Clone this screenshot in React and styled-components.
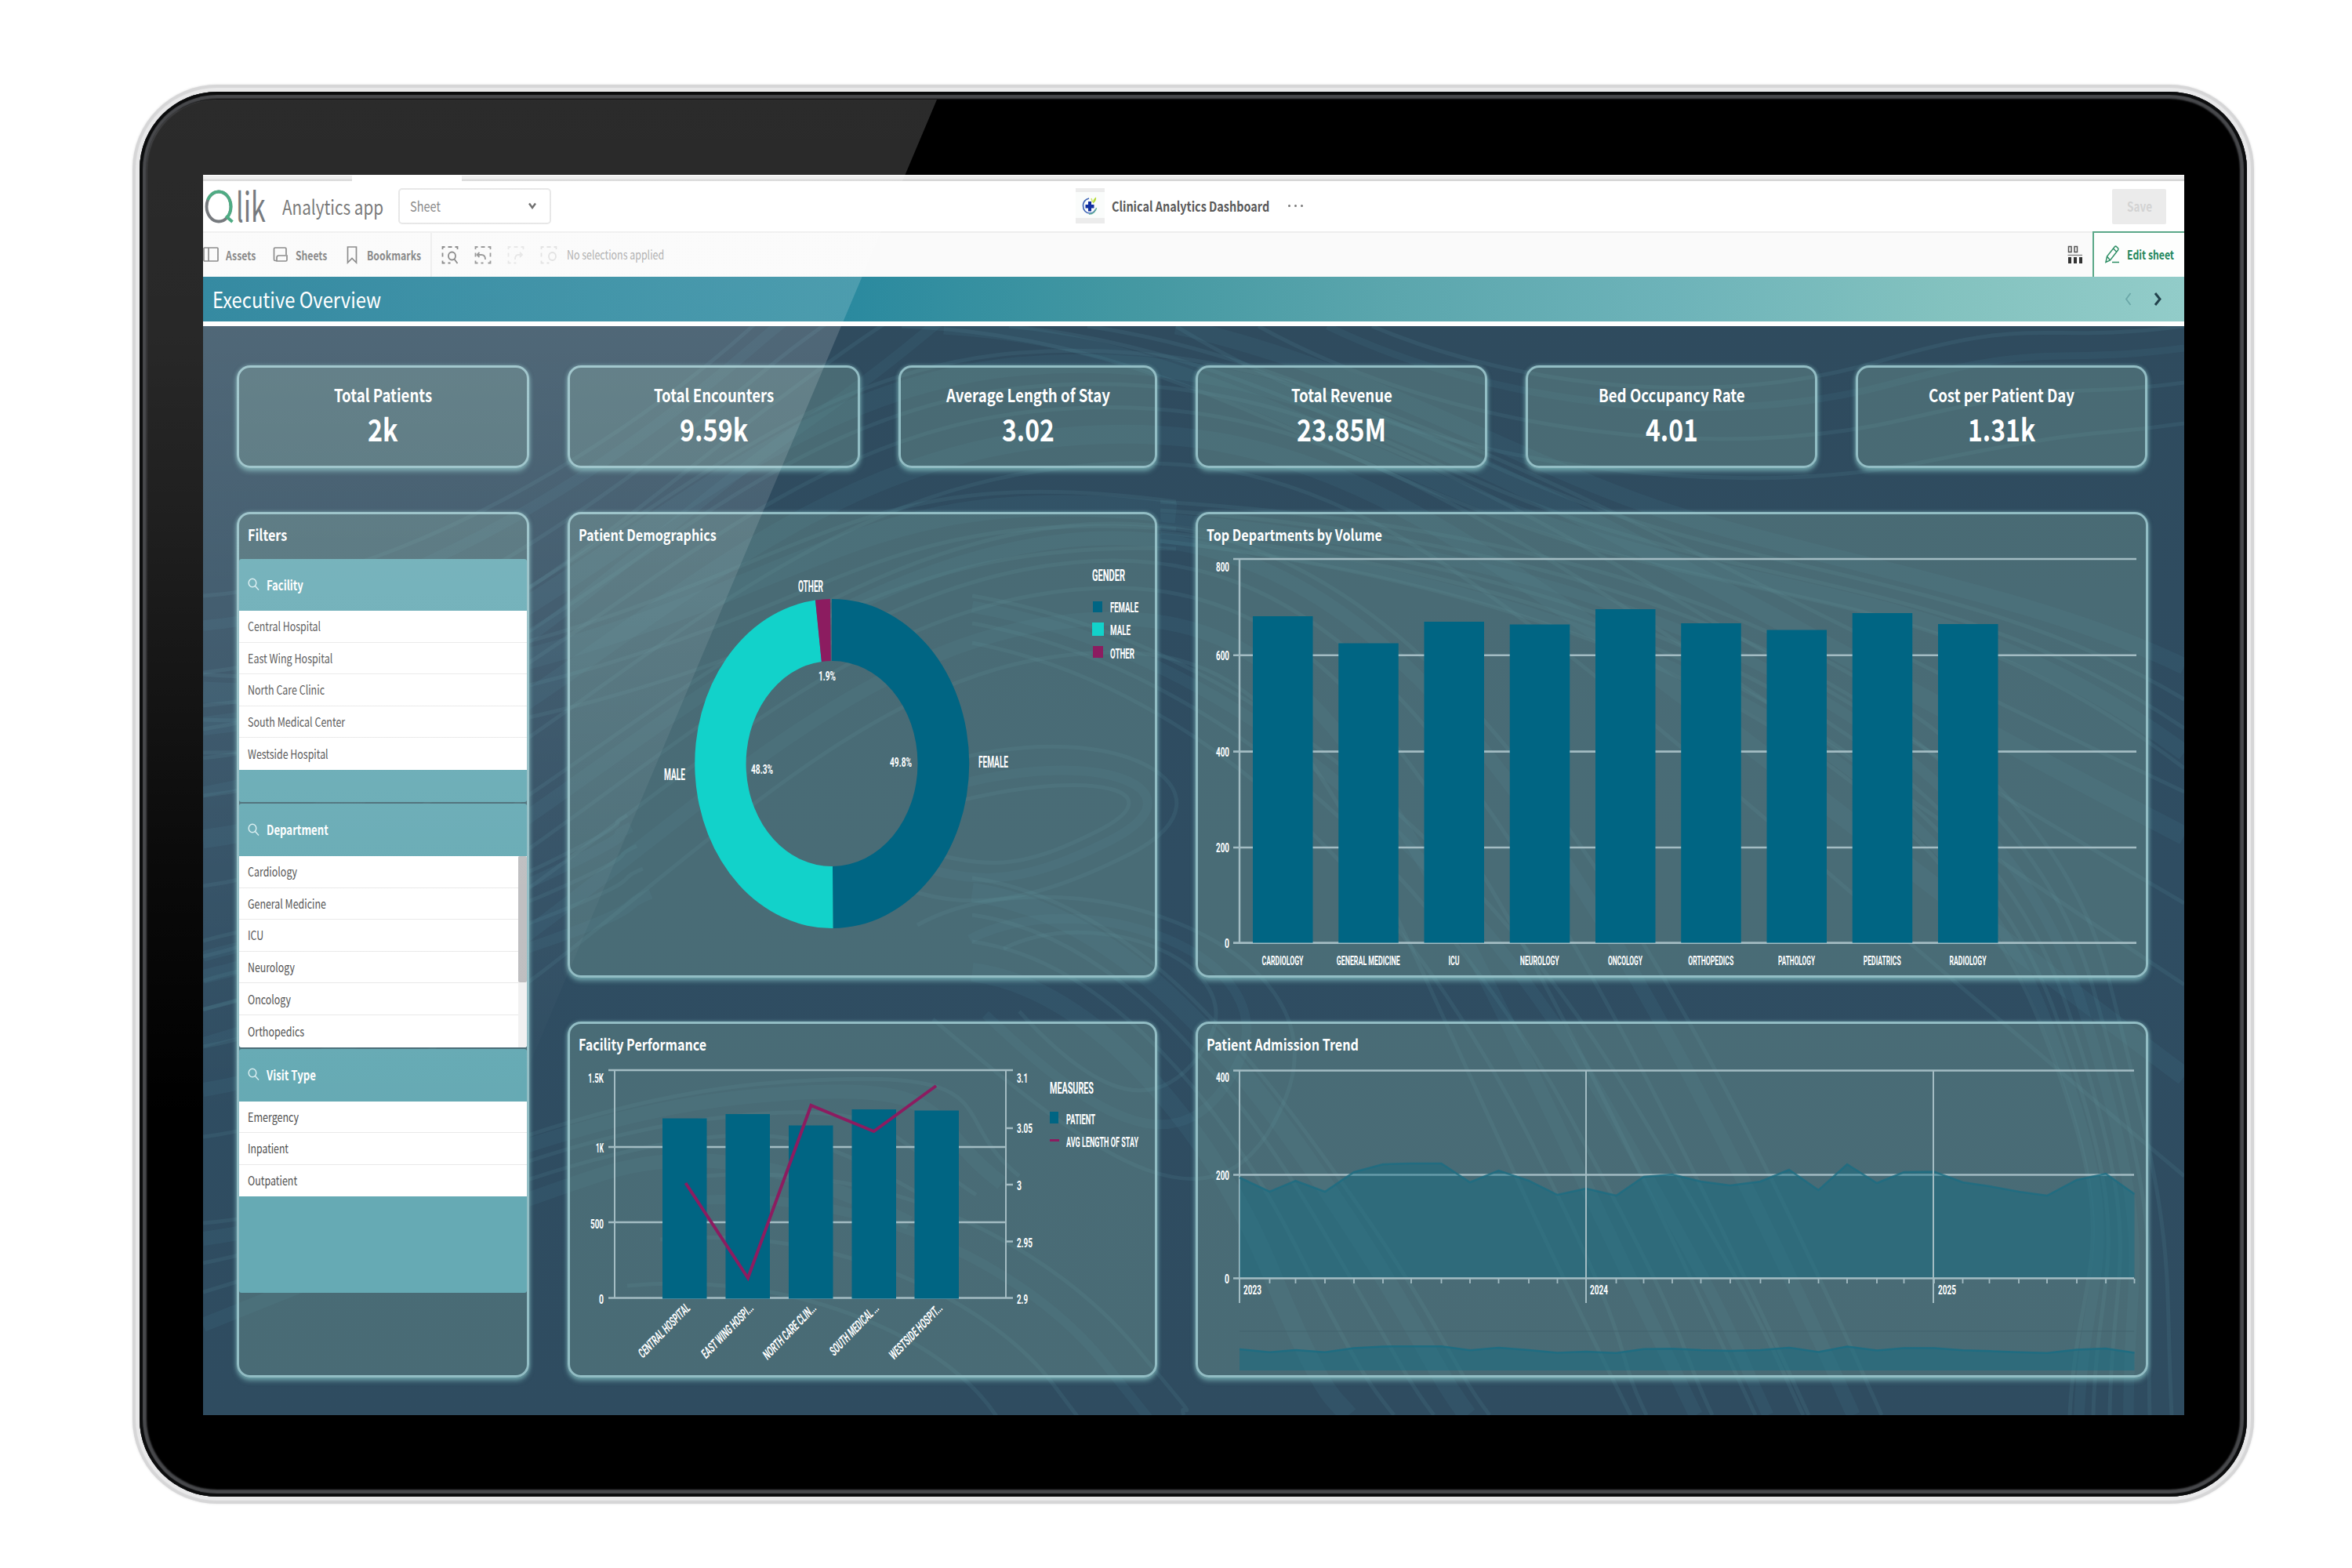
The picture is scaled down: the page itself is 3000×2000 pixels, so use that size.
import React, { useLayoutEffect, useRef, useState } from "react";
import styled, { createGlobalStyle } from "styled-components";

const UI = '"Noto Sans CJK SC", "Noto Sans", sans-serif';
const CHART = 'Roboto, "Liberation Sans", sans-serif';
const TEAL = "#006583";
const MINT = "#12d2ca";
const PLUM = "#8c1c60";
const GRID = "#a3bcc3";

const Global = createGlobalStyle`
  * { box-sizing: border-box; }
  body { margin: 0; background: #fff; }
`;

/* ---------- text squeezed to a given width ---------- */
const FitBox = styled.span`
  display: inline-block;
  flex: none;
  text-align: left;
  white-space: nowrap;
  font-family: ${UI};
  font-size: ${(p) => p.$size}px;
  font-weight: ${(p) => p.$weight || 400};
  line-height: ${(p) => p.$line || Math.round(p.$size * 1.3)}px;
  height: ${(p) => p.$line || Math.round(p.$size * 1.3)}px;
  color: ${(p) => p.$color || "inherit"};
`;
const FitInner = styled.span`
  display: inline-block;
  transform-origin: 0 0;
`;
function Fit({ w, size, weight, line, color, children }) {
  const ref = useRef(null);
  const [k, setK] = useState(1);
  useLayoutEffect(() => {
    const natural = ref.current.offsetWidth;
    if (natural) setK(w / natural);
  }, [w, children]);
  return (
    <FitBox $size={size} $weight={weight} $line={line} $color={color} style={{ width: w }}>
      <FitInner ref={ref} style={{ transform: `scaleX(${k})` }}>{children}</FitInner>
    </FitBox>
  );
}

/* ---------- device ---------- */
const Page = styled.div`
  width: 3000px;
  height: 2000px;
  padding: 108px 125px 82px 169px;
  background: #fff;
`;
const Device = styled.div`
  position: relative;
  width: 2706px;
  height: 1810px;
  padding: 9px;
  border-radius: 108px;
  background: #e9e9ea;
  box-shadow: inset 0 0 1px 4px #d6d6d7, 0 0 3px #ddd;
`;
const Bezel = styled.div`
  width: 100%;
  height: 100%;
  padding: 106px 80px 104px 81px;
  border-radius: 99px;
  background: #000;
  box-shadow: inset 0 0 1px 4px #0b0c0d, inset 0 0 2px 9px #48494c;
`;
const Glare = styled.div`
  position: absolute;
  left: 18px;
  top: 19px;
  width: 1100px;
  height: 1774px;
  border-top-left-radius: 88px;
  clip-path: polygon(0 0, 1008px 0, 259px 1774px, 0 1774px);
  background: linear-gradient(180deg, rgba(255, 255, 255, 0.168) 0, rgba(255, 255, 255, 0.155) 300px, rgba(255, 255, 255, 0.12) 540px, rgba(255, 255, 255, 0.045) 960px, rgba(255, 255, 255, 0) 1300px);
  pointer-events: none;
`;
const Screen = styled.div`
  display: flex;
  flex-direction: column;
  width: 2527px;
  height: 1582px;
  overflow: hidden;
  background: #fff;
`;

/* ---------- browser strip and bars ---------- */
const Strip = styled.div`
  display: flex;
  height: 8px;
  padding-top: 1px;
`;
const StripPart = styled.div`
  width: ${(p) => p.$w || "auto"};
  flex: ${(p) => (p.$w ? "none" : 1)};
  background: ${(p) => (p.$open ? "#fff" : "linear-gradient(#ececec 50%, #d6d6d6 75%)")};
`;
const Header = styled.div`
  display: flex;
  align-items: center;
  height: 66px;
  padding-bottom: 1px;
  border-bottom: 2px solid #eeeeee;
  background: #fff;
`;
const Logo = styled.div`
  display: flex;
  align-items: flex-start;
  width: 80px;
  height: 46px;
  margin: 0 21px 0 0;
  padding: 1px 0 0 2px;
`;
const Dropdown = styled.div`
  display: flex;
  align-items: center;
  justify-content: space-between;
  width: 195px;
  height: 46px;
  margin: 1px 0 0 19px;
  padding: 0 17px 1px 13px;
  border: 2px solid #e3e3e3;
  border-radius: 5px;
`;
const AppTitle = styled.div`
  display: flex;
  align-items: center;
  margin-left: 669px;
`;
const AppIcon = styled.div`
  display: flex;
  align-items: center;
  justify-content: center;
  width: 37px;
  height: 45px;
  margin-right: 9px;
  border-top: 5px solid #ececec;
  border-bottom: 7px solid #ececec;
  background: #fafcfb;
`;
const Dots = styled.div`
  display: flex;
  gap: 5px;
  margin-left: 24px;
  i { width: 3px; height: 3px; border-radius: 50%; background: #777; }
`;
const SaveButton = styled.div`
  display: flex;
  align-items: center;
  justify-content: center;
  width: 69px;
  height: 45px;
  margin: 1px 23px 0 auto;
  border-radius: 2px;
  background: #ebebeb;
`;
const Toolbar = styled.div`
  display: flex;
  align-items: center;
  height: 56px;
  background: #fafafa;
`;
const Tool = styled.div`
  display: flex;
  align-items: center;
  gap: ${(p) => p.$gap}px;
  margin-right: ${(p) => p.$after}px;
  padding-bottom: 1px;
`;
const Divider = styled.div`
  width: 2px;
  height: 100%;
  background: #ececec;
`;
const SelectionTools = styled.div`
  display: flex;
  align-items: center;
  gap: 20px;
  padding: 0 12px;
`;
const Note = styled.div`
  display: flex;
  padding-bottom: 2px;
`;
const ToolbarRight = styled.div`
  display: flex;
  align-items: center;
  gap: 12px;
  height: 100%;
  margin-left: auto;
`;
const EditButton = styled.div`
  display: flex;
  align-items: center;
  gap: 8px;
  width: 117px;
  height: 60px;
  margin: -2px 0;
  padding: 0 0 2px 13px;
  border: 2px solid #5aa888;
  border-right: 0;
  background: #fdfefd;
`;
const SheetBar = styled.div`
  display: flex;
  align-items: center;
  justify-content: space-between;
  height: 57px;
  padding: 0 29px 2px 12px;
  background: linear-gradient(90deg, #0f7490 0, #2b8a9f 33%, #4498a2 47%, #5ba6ad 60%, #6db3b9 74%, #83c2bf 88%, #92ccc9 100%);
`;
const Pager = styled.div`
  display: flex;
  gap: 28px;
  padding-top: 2px;
`;
const Rule = styled.div`
  height: 6px;
  background: #fff;
`;

/* ---------- sheet ---------- */
const Sheet = styled.div`
  position: relative;
  flex: 1;
  padding: 50px 47px 46px 43px;
  background: linear-gradient(180deg, #2f4b5e, #2f4d62 50%, #2f4c60);
`;
const Waves = styled.svg`
  position: absolute;
  inset: 0;
`;
const Content = styled.div`
  position: relative;
  display: flex;
  flex-direction: column;
  gap: 56px;
`;
const KpiRow = styled.div`
  display: grid;
  grid-template-columns: 373px 373px 330px 372px 372px 372px;
  gap: 49px;
  height: 131px;
`;
const cardLook = `
  border: 3px solid #92bdc4;
  border-radius: 17px;
  background: rgba(122, 165, 159, 0.35);
  box-shadow: 0 4px 6px rgba(135, 200, 200, 0.62), 0 0 5px rgba(135, 190, 195, 0.5);
  color: #fff;
`;
const Kpi = styled.div`
  ${cardLook}
  display: flex;
  flex-direction: column;
  align-items: center;
  gap: 6px;
  padding-top: 19px;
`;
const Panels = styled.div`
  display: grid;
  grid-template-columns: 373px 752px 1215px;
  grid-template-rows: 594px 454px;
  column-gap: 49px;
  row-gap: 56px;
`;
const Panel = styled.div`
  ${cardLook}
  display: flex;
  flex-direction: column;
  grid-row: ${(p) => p.$rows || "auto"};
  min-height: 0;
`;
const PanelHead = styled.div`
  height: ${(p) => p.$h || 49}px;
  flex: none;
  padding: 14px 0 0 11px;
`;
const Chart = styled.svg`
  display: block;
  flex: 1;
  min-height: 0;
  width: 100%;
`;

/* ---------- filters ---------- */
const FilterBlock = styled.div`
  height: ${(p) => p.$h}px;
  margin: 0 0 2px 0;
  border-radius: 3px;
  overflow: hidden;
  background: #66aab4;
`;
const FilterHead = styled.div`
  display: flex;
  align-items: center;
  gap: 9px;
  height: ${(p) => p.$h || 67}px;
  padding: 0 0 1px 11px;
`;
const FilterList = styled.div`
  display: flex;
  background: #fff;
`;
const Rows = styled.div`
  flex: 1;
`;
const Row = styled.div`
  display: flex;
  align-items: center;
  height: 40.6px;
  padding-left: 11px;
  border-bottom: ${(p) => (p.$last ? "0" : "1px solid #e9e9e9")};
`;
const Track = styled.div`
  width: 11px;
  background: #f1f1f1;
`;
const Thumb = styled.div`
  height: 161px;
  border-radius: 2px;
  background: #bdbdbf;
`;

/* ---------- icons ---------- */
const Chevron = ({ w, h, d, color, sw = 2.4 }) => (
  <svg width={w} height={h} viewBox={`0 0 ${w} ${h}`} fill="none" stroke={color} strokeWidth={sw}><path d={d} /></svg>
);
const QMark = () => (
  <svg width="40" height="46" viewBox="0 0 40 46" fill="none" strokeWidth="3.8">
    <ellipse cx="18" cy="22.500" rx="15.500" ry="19" stroke="#5c6065" />
    <path d="M4 14C7 7 12 3.500 18 3.500c9 0 15.500 8.500 15.500 19 0 6-2 11-5.500 14.500M27 34.500l8.500 7.500" stroke="#2c9c6c" />
  </svg>
);
const AssetsIcon = () => (
  <svg width="21" height="20" viewBox="0 0 21 20" fill="none" stroke="#777" strokeWidth="1.7"><rect x="1" y="1" width="18" height="17" rx="1" /><path d="M7 1v17" /></svg>
);
const SheetsIcon = () => (
  <svg width="20" height="20" viewBox="0 0 20 20" fill="none" stroke="#777" strokeWidth="1.7"><path d="M5 17.500H3a1.500 1.500 0 0 1-1.500-1.500V2.500A1.500 1.500 0 0 1 3 1h12.500A1.500 1.500 0 0 1 17 2.500V10M7.500 11h10.500v5.500a1.500 1.500 0 0 1-1.500 1.500H5V13.500Q5 11 7.500 11" /></svg>
);
const BookmarkIcon = () => (
  <svg width="14" height="24" viewBox="0 0 14 24" fill="none" stroke="#777" strokeWidth="1.700"><path d="M1.500 22V2h11v20L7 16.500z" /></svg>
);
const SelIcon = ({ color, children }) => (
  <svg width="22" height="25" viewBox="0 0 22 25" fill="none" stroke={color} strokeWidth="1.800">
    <path d="M1.500 5V2h3M8.500 2h5M17.500 2h3v3M1.500 9.500v5M1.500 19.500v3h3M8.500 22.500h3" />
    {children}
  </svg>
);
const GridIcon = () => (
  <svg width="20" height="24" viewBox="0 0 20 24" fill="none" stroke="#555" strokeWidth="1.500">
    <path d="M1.500 1.500h3.500v7H1.500zM9 1.500h3.500v7H9z" /><path d="M.5 12.500h18.500" stroke="#888" />
    <path d="M1 15h4v8H1zM8 15h4v8H8zM15 15h4v8h-4z" fill="#333" stroke="none" />
  </svg>
);
const PencilIcon = () => (
  <svg width="21" height="25" viewBox="0 0 21 25" fill="none" stroke="#2f8f66" strokeWidth="1.500">
    <path d="M2 22.500l1.500-7.500L13.500 2.500q1-1 2.500.5l1.500 1.500q1 1 0 2.500L7.500 20zM3.500 15l4 5M11.500 5l4.500 4.500M10 22.500h9" />
  </svg>
);
const SearchIcon = () => (
  <svg width="15" height="17" viewBox="0 0 15 17" fill="none" stroke="#d8edf0" strokeWidth="1.500"><ellipse cx="6" cy="6.500" rx="4.800" ry="5.300" /><path d="M9.500 10.500l4.500 5" /></svg>
);
const HealthIcon = () => (
  <svg width="21" height="28" viewBox="0 0 21 28" fill="none">
    <path d="M9 5C4 6.500 1.500 10 1.500 14.500c0 6 4 9.500 8.500 9.500 3.500 0 6-2 7.500-5" stroke="#3c62b4" strokeWidth="1.600" />
    <path d="M9 25c5 .5 9-4 9.500-8" stroke="#5fae9a" strokeWidth="1.500" />
    <path d="M14 11c0-4 2-6.500 4-7.500.5 3-.5 6-4 8z" fill="#b7dc3c" /><path d="M13.500 10L12 5" stroke="#cde56a" strokeWidth="1.500" />
    <path d="M8 9h4v4h3.500v4.500H12v4H8v-4H4.500V13H8z" fill="#1230a0" />
  </svg>
);

/* ---------- contour lines behind the sheet ---------- */
const mix = (a, b, t) => a.map((v, i) => Math.round(v + (b[i] - v) * t));
const toPath = (n) => `M${n[0]} ${n[1]}C${n.slice(2, 8).join(" ")}S${n.slice(8).join(" ")}`;
const BUNDLES = [
  [[259, 760, 520, 740, 800, 560, 960, 416, 1100, 380, 1200, 340], [259, 1010, 560, 960, 800, 700, 1000, 560, 1200, 400, 1300, 330], 5, 9],
  [[259, 900, 700, 860, 900, 480, 1300, 450, 2000, 640, 2786, 1010], [259, 1130, 640, 1080, 900, 660, 1330, 600, 1900, 760, 2786, 1500], 6, 16],
  [[259, 1220, 640, 1130, 900, 760, 1300, 680, 2000, 900, 2400, 1805], [259, 1450, 660, 1400, 960, 900, 1330, 840, 1700, 1050, 2080, 1805], 6, 12],
  [[259, 860, 500, 880, 700, 820, 900, 740, 1200, 600, 1500, 640], [259, 960, 500, 960, 700, 920, 900, 850, 1200, 690, 1500, 700], 4, 18],
  [[1150, 416, 1500, 430, 1700, 600, 2000, 690, 2500, 760, 2786, 980], [1500, 416, 1750, 470, 1950, 600, 2150, 660, 2600, 760, 2786, 850], 5, 14],
  [[1750, 416, 1950, 500, 2200, 520, 2400, 460, 2600, 440, 2786, 416], [1500, 416, 1800, 600, 2200, 640, 2450, 590, 2650, 560, 2786, 540], 4, 6],
  [[1480, 690, 2100, 760, 2480, 1000, 2600, 1300, 2650, 1600, 2640, 1805], [1480, 640, 2150, 680, 2600, 900, 2690, 1250, 2760, 1600, 2770, 1805], 7, 9],
  [[1240, 760, 1600, 820, 1900, 1100, 2080, 1400, 2250, 1700, 2300, 1805], [1240, 820, 1550, 880, 1800, 1150, 1950, 1450, 2050, 1700, 2100, 1805], 4, 10],
  [[1240, 1120, 1450, 1150, 1600, 1350, 1720, 1520, 1850, 1740, 1900, 1805], [1240, 1240, 1400, 1260, 1550, 1450, 1620, 1620, 1700, 1780, 1720, 1805], 5, 16],
  [[900, 1500, 1150, 1480, 1350, 1600, 1450, 1720, 1500, 1780, 1510, 1805], [800, 1640, 1000, 1620, 1200, 1700, 1270, 1805, 1290, 1830, 1300, 1850], 4, 8],
  [[259, 1560, 500, 1540, 700, 1400, 1000, 1380, 1200, 1420, 1300, 1500], [259, 1690, 480, 1600, 640, 1540, 760, 1500, 1000, 1480, 1160, 1560], 5, 12],
  [[1230, 1020, 1400, 980, 1500, 1010, 1400, 1060, 1260, 1110, 1160, 1080], [1180, 980, 1420, 900, 1600, 1010, 1440, 1090, 1200, 1160, 1100, 1110], 3, 8],
  [[1280, 1210, 1400, 1150, 1600, 1230, 1540, 1330, 1400, 1400, 1300, 1290], [1170, 1180, 1350, 1080, 1720, 1200, 1640, 1400, 1400, 1480, 1190, 1300], 3, 8],
  [[259, 1200, 400, 1160, 560, 1170, 700, 1100, 760, 1060, 800, 1040], [259, 1330, 420, 1280, 560, 1250, 700, 1200, 780, 1160, 830, 1140], 5, 9],
];
const Contours = () => (
  <Waves width="2527" height="1389" viewBox="259 416 2527 1389" fill="none" stroke="#5591a4">
    {BUNDLES.map(([a, b, n, w], k) =>
      Array.from({ length: n }, (_, i) => (
        <path key={`${k}-${i}`} d={toPath(mix(a, b, Math.pow(i / (n - 1), 1.35)))} strokeWidth={i % 3 === 1 ? w * 1.5 : 5} strokeOpacity={i % 3 === 1 ? 0.11 : 0.15} />
      ))
    )}
  </Waves>
);

/* ---------- chart text ---------- */
const T = ({ x, y, w, s = 17, a = "start", children, ...rest }) => (
  <text x={x} y={y} textAnchor={a} textLength={w} lengthAdjust="spacingAndGlyphs" fontFamily={CHART} fontSize={s} fontWeight="700" fill="#fff" {...rest}>{children}</text>
);

/* ---------- donut ---------- */
const CX = 1061, CY = 975;
const pt = (deg, rx, ry) => {
  const r = (deg * Math.PI) / 180;
  return `${(CX + rx * Math.sin(r)).toFixed(1)} ${(CY - ry * Math.cos(r)).toFixed(1)}`;
};
const slice = (a, b) => {
  const big = b - a > 180 ? 1 : 0;
  return `M${pt(a, 174.5, 210)}A174.5 210 0 ${big} 1 ${pt(b, 174.5, 210)}L${pt(b, 109, 131)}A109 131 0 ${big} 0 ${pt(a, 109, 131)}Z`;
};
const Donut = () => (
  <Chart viewBox="727 706 746 539">
    <path d={slice(0, 179.5)} fill={TEAL} />
    <path d={slice(179.5, 353.1)} fill={MINT} />
    <path d={slice(353.1, 359.3)} fill={PLUM} />
    <T x={1018} y={756} w={32} s={20}>OTHER</T>
    <T x={847} y={996} w={27} s={20}>MALE</T>
    <T x={1248} y={980} w={38} s={20}>FEMALE</T>
    <T x={1044} y={869} w={22}>1.9%</T>
    <T x={958} y={988} w={28}>48.3%</T>
    <T x={1135} y={979} w={28}>49.8%</T>
    <T x={1393} y={742} w={42} s={21}>GENDER</T>
    <rect x="1394" y="768" width="12" height="14" fill={TEAL} />
    <rect x="1393" y="795" width="15" height="17" fill={MINT} />
    <rect x="1394" y="825" width="13" height="15" fill={PLUM} />
    <T x={1416} y={782} w={36} s={19}>FEMALE</T>
    <T x={1416} y={811} w={26} s={19}>MALE</T>
    <T x={1416} y={841} w={31} s={19}>OTHER</T>
  </Chart>
);

/* ---------- departments ---------- */
const DEPTS = [
  ["CARDIOLOGY", 787, 53], ["GENERAL MEDICINE", 821.5, 81], ["ICU", 794, 14], ["NEUROLOGY", 797.5, 50],
  ["ONCOLOGY", 778, 44], ["ORTHOPEDICS", 796, 58], ["PATHOLOGY", 804.5, 47], ["PEDIATRICS", 783, 48], ["RADIOLOGY", 797, 47],
];
const Departments = () => (
  <Chart viewBox="1528 706 1209 539">
    {[[714, "800", 729.5], [836.7, "600", 843], [959.6, "400", 966], [1082, "200", 1088], [1203.6, "0", 1210]].map(([y, l, ty]) => (
      <g key={l}>
        <path d={`M1573 ${y}H2725`} stroke={GRID} strokeWidth="2.600" />
        <T x={1568} y={ty} w={l === "0" ? 6 : 17} a="end" s={16.5}>{l}</T>
      </g>
    ))}
    <path d="M1581 714V1204" stroke={GRID} strokeWidth="2.400" />
    {DEPTS.map(([name, top, w], i) => {
      const x = 1598 + i * 109.25;
      return (
        <g key={name}>
          <rect x={x} y={top} width="76.500" height={1203.5 - top} fill={TEAL} />
          <T x={x + 38} y={1231.5} w={w} a="middle">{name}</T>
        </g>
      );
    })}
  </Chart>
);

/* ---------- facility performance ---------- */
const FAC = [
  ["CENTRAL HOSPITAL", 845, 1427.5, 881, 88], ["EAST WING HOSPI...", 925.5, 1422, 962, 89], ["NORTH CARE CLIN...", 1006, 1436.5, 1042, 91],
  ["SOUTH MEDICAL ...", 1086.5, 1416, 1122, 84], ["WESTSIDE HOSPIT...", 1166.5, 1417.5, 1203, 91],
];
const Facility = () => (
  <Chart viewBox="727 1356 746 399">
    <g stroke={GRID} strokeWidth="2.600">
      <path d="M776 1366H1292M776 1464H1283M776 1560H1283M776 1656.500H1292M1283 1440h9M1283 1512h9M1283 1584.500h9" />
      <path d="M784 1366V1656M1283 1366V1656" strokeWidth="2" />
    </g>
    {FAC.map(([name, x, top, lx, len]) => (
      <g key={name}>
        <rect x={x} y={top} width="56.500" height={1657.5 - top} fill={TEAL} />
        <T x={0} y={0} w={len} a="end" s={16.5} transform={`translate(${lx} 1671) rotate(-46) skewX(-12)`}>{name}</T>
      </g>
    ))}
    <path d="M874.500 1510L954 1631L1034.500 1411L1114.500 1444L1194 1386" fill="none" stroke={PLUM} strokeWidth="4" />
    {[["1.5K", 1382, 20], ["1K", 1471, 10], ["500", 1568, 17], ["0", 1664, 6]].map(([l, y, w]) => <T key={l} x={770} y={y} w={w} a="end">{l}</T>)}
    {[["3.1", 1382, 14], ["3.05", 1446, 20], ["3", 1518.5, 6], ["2.95", 1592, 20], ["2.9", 1664, 14]].map(([l, y, w]) => <T key={l} x={1297} y={y} w={w}>{l}</T>)}
    <T x={1339} y={1396} w={56} s={21}>MEASURES</T>
    <rect x="1339" y="1419" width="11" height="15" fill={TEAL} />
    <path d="M1339 1455.500h12" stroke={PLUM} strokeWidth="3" />
    <T x={1360} y={1434.5} w={37} s={18.5}>PATIENT</T>
    <T x={1360} y={1463.5} w={92} s={18.5}>AVG LENGTH OF STAY</T>
  </Chart>
);

/* ---------- admission trend ---------- */
const TREND = [
  [1581, 1503], [1619.5, 1521], [1652.5, 1507], [1690, 1521], [1727, 1496], [1764, 1486], [1800, 1485], [1838.5, 1485], [1875, 1509],
  [1911.5, 1494], [1950, 1507], [1986.5, 1525], [2023, 1517], [2061.5, 1526], [2096.5, 1502], [2133, 1499], [2169.5, 1508], [2207, 1513],
  [2245.5, 1508], [2282, 1493], [2319.5, 1519], [2356, 1486], [2394, 1510], [2428.5, 1496], [2467, 1495.5], [2503.5, 1509],
  [2537.5, 1514], [2575, 1521], [2611, 1526], [2649, 1506], [2686, 1498], [2722.5, 1524],
];
const main = TREND.map((p) => p.join(" ")).join("L");
const mini = TREND.map(([x, y]) => `${x} ${(1749 - (1631.5 - y) * 0.21).toFixed(1)}`).join("L");
const Trend = () => (
  <Chart viewBox="1528 1356 1209 399">
    <g stroke={GRID} strokeWidth="2.600">
      <path d="M1573 1366.500H2722M1573 1499.500H2722" />
      <path d="M1581 1366V1663M2023 1366V1663M2466 1366V1663" strokeWidth="2" />
    </g>
    <path d={`M${main}L2722.500 1631L1581 1631Z`} fill="#0a6b85" fillOpacity=".4" />
    <path d={`M${main}`} fill="none" stroke="#1d6d82" strokeOpacity=".8" strokeWidth="2.500" />
    <path d="M2023 1480V1632M2466 1480V1632" stroke={GRID} strokeWidth="2" />
    <path d="M1573 1631.500H2722" stroke={GRID} strokeWidth="2.600" />
    <path d={TREND.map(([x]) => `M${x} 1632v6`).join("")} stroke={GRID} strokeWidth="1.800" />
    <path d="M1581 1699H2722" stroke="#3f5f6b" strokeOpacity=".5" strokeWidth="1.500" />
    <path d={`M${mini}L2722.500 1749L1581 1749Z`} fill="#0a6b85" fillOpacity=".4" />
    <path d={`M${mini}`} fill="none" stroke="#1d6d82" strokeOpacity=".9" strokeWidth="2.500" />
    {[["400", 1381], ["200", 1506], ["0", 1638]].map(([l, y]) => <T key={l} x={1568} y={y} w={l === "0" ? 6 : 17} a="end" s={16.5}>{l}</T>)}
    {[["2023", 1586], ["2024", 2028], ["2025", 2472]].map(([l, x]) => <T key={l} x={x} y={1652} w={23} s={16.5}>{l}</T>)}
  </Chart>
);

/* ---------- data ---------- */
const KPIS = [
  ["Total Patients", 125, "2k", 39], ["Total Encounters", 153, "9.59k", 87], ["Average Length of Stay", 209, "3.02", 67],
  ["Total Revenue", 129, "23.85M", 114], ["Bed Occupancy Rate", 187, "4.01", 67], ["Cost per Patient Day", 186, "1.31k", 86],
];
const FILTERS = [
  { name: "Facility", w: 47, h: 310, head: 66, rows: [["Central Hospital", 93], ["East Wing Hospital", 108], ["North Care Clinic", 98], ["South Medical Center", 124], ["Westside Hospital", 103]] },
  { name: "Department", w: 79, h: 310.5, scroll: true, rows: [["Cardiology", 63], ["General Medicine", 100], ["ICU", 20], ["Neurology", 60], ["Oncology", 55], ["Orthopedics", 72]] },
  { name: "Visit Type", w: 63, h: 311, rows: [["Emergency", 65], ["Inpatient", 52], ["Outpatient", 63]] },
];

const Title = ({ w, children }) => <Fit w={w} size={20} weight={700} line={24}>{children}</Fit>;

export default function App() {
  return (
    <Page>
      <Global />
      <Device>
        <Bezel>
          <Screen>
            <Strip><StripPart $w="190px" /><StripPart $w="140px" $open /><StripPart /></Strip>
            <Header>
              <Logo><QMark /><Fit w={38} size={51} weight={400} line={40} color="#5c6065">lik</Fit></Logo>
              <Fit w={129} size={25.5} line={32} color="#5f5f5f">Analytics app</Fit>
              <Dropdown>
                <Fit w={39} size={17.5} color="#737373">Sheet</Fit>
                <Chevron w={10} h={9} d="M1 1.500l4 5.500 4-5.500" color="#555" />
              </Dropdown>
              <AppTitle>
                <AppIcon><HealthIcon /></AppIcon>
                <Fit w={201} size={17.5} weight={700} color="#5a5a5a">Clinical Analytics Dashboard</Fit>
                <Dots><i /><i /><i /></Dots>
              </AppTitle>
              <SaveButton><Fit w={32} size={16.5} weight={700} color="#d3d3d3">Save</Fit></SaveButton>
            </Header>
            <Toolbar>
              <Tool $gap={8} $after={22}><AssetsIcon /><Fit w={38} size={15.5} weight={700} color="#747474">Assets</Fit></Tool>
              <Tool $gap={9} $after={25}><SheetsIcon /><Fit w={40} size={15.5} weight={700} color="#747474">Sheets</Fit></Tool>
              <Tool $gap={12} $after={12}><BookmarkIcon /><Fit w={69} size={15.5} weight={700} color="#747474">Bookmarks</Fit></Tool>
              <Divider />
              <SelectionTools>
                <SelIcon color="#777"><ellipse cx="13.500" cy="13.500" rx="4.500" ry="5" /><path d="M16.500 17.500l4 5.500" /></SelIcon>
                <SelIcon color="#888"><path d="M6.500 9L3.500 12l3 3M4 12h5q5 0 5 6M20.500 9.500v5M20.500 19.500v3h-3" /></SelIcon>
                <SelIcon color="#e3e3e3"><path d="M16 9l3 3-3 3M18 12h-4q-4 0-4 6" /></SelIcon>
                <SelIcon color="#dedede"><ellipse cx="15.500" cy="14" rx="4.500" ry="5" /></SelIcon>
              </SelectionTools>
              <Note><Fit w={124} size={15.5} color="#a3a3a3">No selections applied</Fit></Note>
              <ToolbarRight>
                <GridIcon />
                <EditButton><PencilIcon /><Fit w={60} size={15.5} weight={700} color="#23875c">Edit sheet</Fit></EditButton>
              </ToolbarRight>
            </Toolbar>
            <SheetBar>
              <Fit w={215} size={28} line={38} color="#fff">Executive Overview</Fit>
              <Pager>
                <Chevron w={9} h={17} d="M7.500 1L2 8.500l5.500 7.500" color="#6ba7a8" sw={1.8} />
                <Chevron w={10} h={17} d="M2 1l6 7.500-6 7.500" color="#23424c" sw={3} />
              </Pager>
            </SheetBar>
            <Rule />
            <Sheet>
              <Contours />
              <Content>
                <KpiRow>
                  {KPIS.map(([label, w, value, vw]) => (
                    <Kpi key={label}>
                      <Fit w={w} size={22.5} weight={700} line={30}>{label}</Fit>
                      <Fit w={vw} size={39} weight={700} line={44}>{value}</Fit>
                    </Kpi>
                  ))}
                </KpiRow>
                <Panels>
                  <Panel $rows="1 / span 2">
                    <PanelHead $h={57}><Title w={50}>Filters</Title></PanelHead>
                    {FILTERS.map((f) => (
                      <FilterBlock key={f.name} $h={f.h}>
                        <FilterHead $h={f.head}><SearchIcon /><Fit w={f.w} size={17} weight={700}>{f.name}</Fit></FilterHead>
                        <FilterList>
                          <Rows>
                            {f.rows.map(([t, w], i) => (
                              <Row key={t} $last={i === f.rows.length - 1}><Fit w={w} size={16} color="#4f4f4f">{t}</Fit></Row>
                            ))}
                          </Rows>
                          {f.scroll && <Track><Thumb /></Track>}
                        </FilterList>
                      </FilterBlock>
                    ))}
                  </Panel>
                  <Panel><PanelHead><Title w={176}>Patient Demographics</Title></PanelHead><Donut /></Panel>
                  <Panel><PanelHead><Title w={224}>Top Departments by Volume</Title></PanelHead><Departments /></Panel>
                  <Panel><PanelHead><Title w={163}>Facility Performance</Title></PanelHead><Facility /></Panel>
                  <Panel><PanelHead><Title w={194}>Patient Admission Trend</Title></PanelHead><Trend /></Panel>
                </Panels>
              </Content>
            </Sheet>
          </Screen>
        </Bezel>
        <Glare />
      </Device>
    </Page>
  );
}
